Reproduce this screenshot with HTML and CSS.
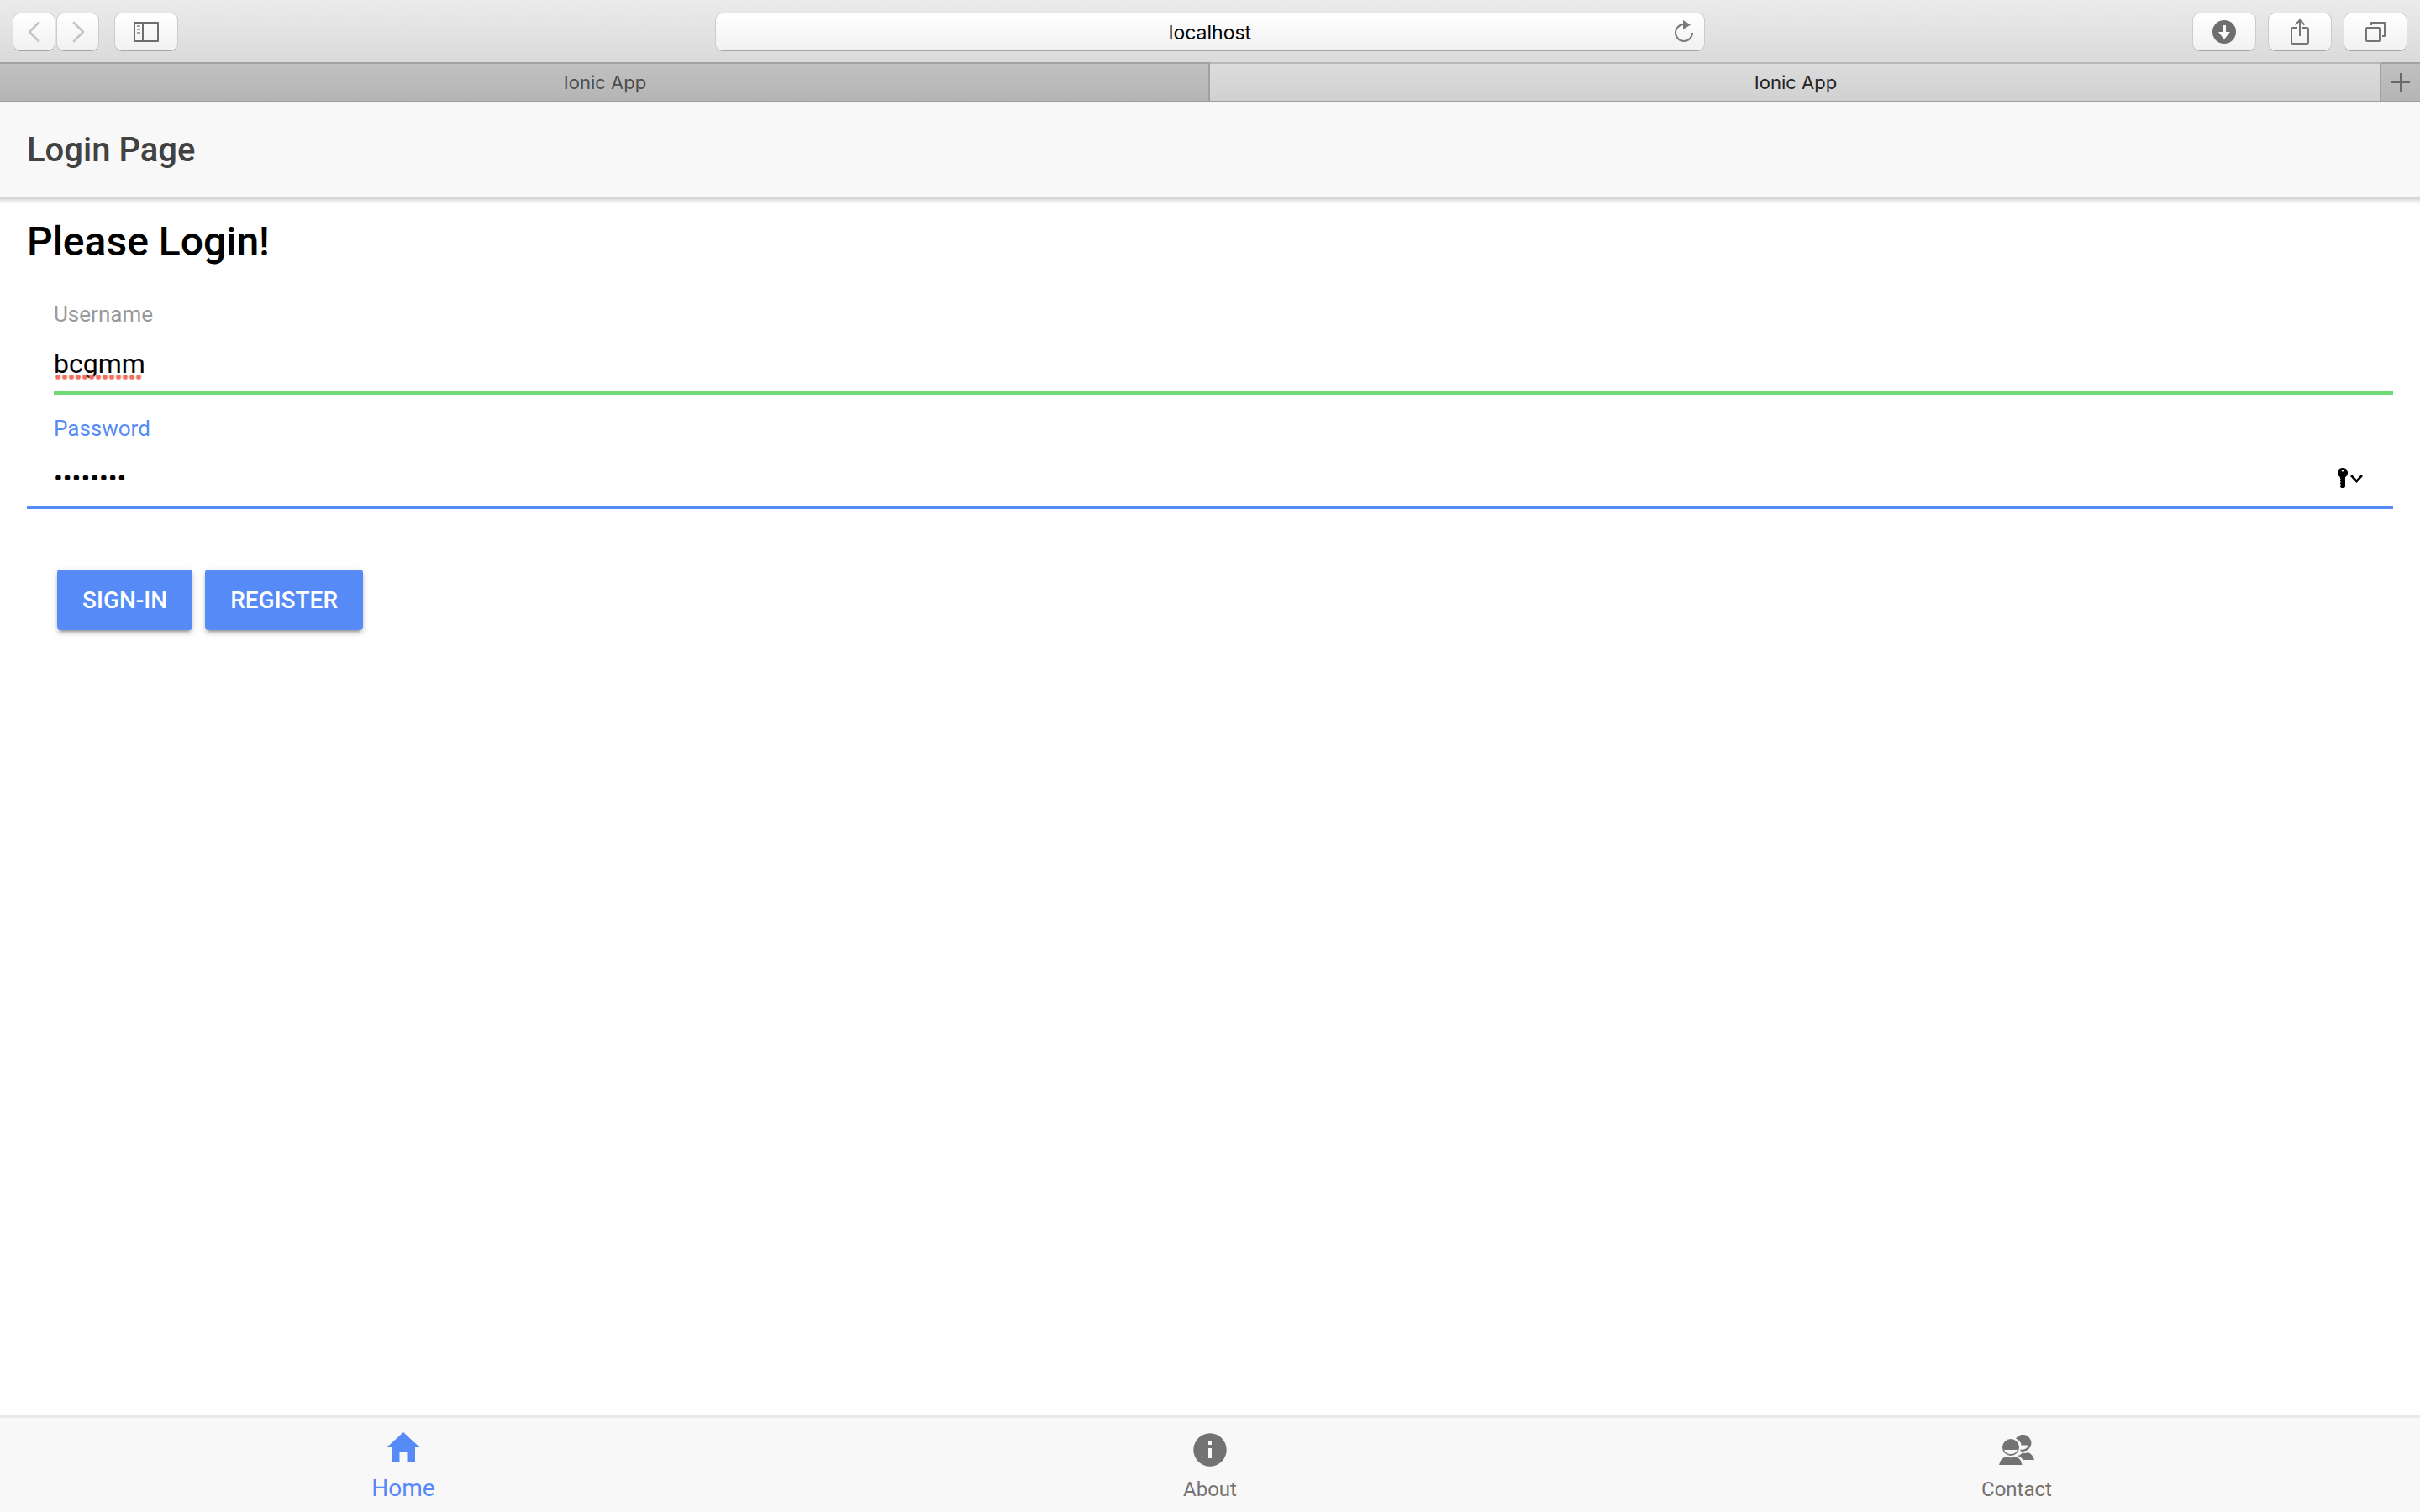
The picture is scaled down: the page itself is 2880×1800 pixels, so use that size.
FILE: index.html
```html
<!DOCTYPE html>
<html lang="en">
<head>
<meta charset="utf-8">
<title>Ionic App</title>
<link rel="stylesheet" href="styles.css">
</head>
<body>
<div class="browser">
  <div class="toolbar">
    <div class="toolbar-group">
      <div class="nav-pair">
        <button class="tool tool-nav" type="button" aria-label="Back"><svg width="16" height="26" viewBox="0 0 16 26"><path d="M13 2 2 13l11 11" fill="none" stroke="#c4c4c4" stroke-width="2.6" stroke-linecap="round" stroke-linejoin="round"/></svg></button>
        <button class="tool tool-nav" type="button" aria-label="Forward"><svg width="16" height="26" viewBox="0 0 16 26"><path d="m3 2 11 11L3 24" fill="none" stroke="#c4c4c4" stroke-width="2.6" stroke-linecap="round" stroke-linejoin="round"/></svg></button>
      </div>
      <button class="tool" type="button" aria-label="Show sidebar"><svg width="30" height="24" viewBox="0 0 30 24"><path d="M1 1h28v22H1zM11 1v22" fill="none" stroke="#6e6e6e" stroke-width="2" stroke-linejoin="round"/><path d="M4 5h4M4 9h4M4 13h4" stroke="#a4a4a4" stroke-width="2"/></svg></button>
    </div>
    <div class="address">
      <input class="address-input" type="text" value="localhost" aria-label="Address" spellcheck="false">
      <button class="reload" type="button" aria-label="Reload"><svg width="24" height="28" viewBox="0 0 24 28"><path d="M12 6a10 10 0 1 0 10 10" fill="none" stroke="#7a7a7a" stroke-width="2"/><path d="M11 1v11l9-5.5z" fill="#7a7a7a"/></svg></button>
    </div>
    <div class="toolbar-group toolbar-end">
      <button class="tool" type="button" aria-label="Downloads"><svg width="28" height="28" viewBox="0 0 28 28"><circle cx="14" cy="14" r="14" fill="#6e6e6e"/><path d="M12 6h4v8h5l-7 9-7-9h5z" fill="#fafafa"/></svg></button>
      <button class="tool" type="button" aria-label="Share"><svg width="22" height="34" viewBox="0 0 22 34"><path d="M8 12H3a2 2 0 0 0-2 2v15a2 2 0 0 0 2 2h16a2 2 0 0 0 2-2V14a2 2 0 0 0-2-2h-5M11 22V3M5.500 8.500 11 3l5.500 5.500" fill="none" stroke="#747474" stroke-width="2"/></svg></button>
      <button class="tool" type="button" aria-label="Show all tabs"><svg width="24" height="24" viewBox="0 0 24 24"><path d="M7 4V1h16v16h-3" fill="none" stroke="#747474" stroke-width="2" stroke-linejoin="round"/><rect x="1" y="7" width="16" height="16" rx="1" fill="none" stroke="#747474" stroke-width="2"/></svg></button>
    </div>
  </div>
  <div class="browser-tabs">
    <button class="browser-tab" type="button">Ionic App</button>
    <div class="tab-end">
      <button class="browser-tab browser-tab-active" type="button">Ionic App</button>
      <button class="new-tab" type="button" aria-label="New tab"><svg width="22" height="22" viewBox="0 0 22 22"><path d="M11 0v22M0 11h22" stroke="#686868" stroke-width="2"/></svg></button>
    </div>
  </div>
</div>

<header class="page-header"><h1 class="page-title">Login Page</h1></header>

<main class="content">
  <h2 class="heading">Please Login!</h2>
  <form class="login">
    <div class="item item-username">
      <label class="label" for="username">Username</label>
      <div class="control">
        <input class="field" id="username" type="text" value="bcgmm" spellcheck="false">
        <span class="misspelling" aria-hidden="true"></span>
      </div>
    </div>
    <div class="item item-password">
      <label class="label label-focus" for="password">Password</label>
      <div class="control">
        <input class="field" id="password" type="password" value="password">
        <button class="autofill" type="button" aria-label="Fill password"><svg width="30" height="24" viewBox="0 0 30 24"><path fill-rule="evenodd" d="M6 0a6 6 0 0 1 3 11.200V22q0 2-3 2t-3-2v-1l1-1-1-1v-1l1-1-1-1v-1l1-1-1-1v-1.800A6 6 0 0 1 6 0zM6 2a1.300 1.300 0 0 0 0 2.600A1.300 1.300 0 0 0 6 2z"/><path d="m16 9 6.500 7L29 9" fill="none" stroke="#000" stroke-width="2.600"/></svg></button>
      </div>
    </div>
    <div class="actions">
      <button class="btn" type="button">SIGN-IN</button>
      <button class="btn" type="button">REGISTER</button>
    </div>
  </form>
</main>

<nav class="tabbar">
  <a class="tab tab-selected" href="#home"><svg width="40" height="36" viewBox="0 0 40 36"><path d="M20 0 39.500 18H34v18H24.500V24h-9v12H6V18H.5z" fill="#568bf7"/></svg><span>Home</span></a>
  <a class="tab" href="#about"><svg width="40" height="40" viewBox="0 0 40 40"><circle cx="20" cy="20" r="19.700" fill="#737373"/><path d="M18 10h4v4h-4zM18 18h4v12h-4z" fill="#f8f8f8"/></svg><span>About</span></a>
  <a class="tab" href="#contact"><svg width="42" height="38" viewBox="0 0 42 38"><path d="M20 4.500A10 10 0 1 1 25 19.300L26 17.600A7.500 7.500 0 0 0 35 12.500H26.500Q26 7 20 4.500zM24 24.500Q27 23 27.500 21.500 31 22.500 34.500 21 40 23 42 30H28.500Q27 27 22 25z" fill="#737373"/><path fill-rule="evenodd" d="M14 5a10 10 0 1 1 0 20 10 10 0 0 1 0-20zM6 18Q8 23 14 23t8-5z" fill="#737373"/><path d="M0 36Q2 28 8 26q6 2.500 12 0 6 2 7.500 10z" fill="#737373"/></svg><span>Contact</span></a>
</nav>
</body>
</html>
```
FILE: styles.css
```css
* { box-sizing: border-box; }

html { height: 100%; }

body {
  margin: 0;
  min-height: 100%;
  display: flex;
  flex-direction: column;
  background: #fff;
  color: #000;
  font-family: Roboto, "Liberation Sans", sans-serif;
}

button, input {
  margin: 0;
  padding: 0;
  border: 0;
  background: none;
  color: inherit;
  font: inherit;
  outline: none;
}

svg { display: block; }

/* Browser chrome */
.browser { font-family: Inter, "Liberation Sans", sans-serif; }

.toolbar {
  display: grid;
  grid-template-columns: 1fr 1178px 1fr;
  align-items: center;
  height: 74px;
  padding: 2px 15px 0;
  background: linear-gradient(#ebebeb, #dadada);
}

.toolbar-group { display: flex; gap: 18px; }
.toolbar-end { justify-content: flex-end; gap: 14px; }
.nav-pair { display: flex; gap: 1px; }

.tool, .address {
  height: 46px;
  border: 1px solid #cbcbcb;
  border-bottom-color: #a6a6a6;
  border-radius: 9px;
  background: linear-gradient(#fff, #f1f1f1);
}

.tool {
  display: flex;
  align-items: center;
  justify-content: center;
  width: 76px;
}

.tool-nav { width: 51px; }

.address { position: relative; }

.address-input {
  width: 100%;
  height: 100%;
  padding-top: 2px;
  text-align: center;
  font-size: 23px;
}

.reload {
  position: absolute;
  top: 7px;
  right: 12px;
}

.browser-tabs {
  display: grid;
  grid-template-columns: 1fr 1fr;
  height: 48px;
  border-bottom: 2px solid #9e9e9e;
}

.tab-end { display: flex; }

.browser-tab, .new-tab {
  border-top: 2px solid #a2a2a2;
  background: linear-gradient(#c0c0c0, #b5b5b5);
}

.browser-tab {
  padding-left: 2px;
  border-right: 2px solid #a0a0a0;
  color: #4c4c4c;
  font-size: 22px;
}

.browser-tab-active {
  flex: 1;
  border-top-color: #b8b8b8;
  background: linear-gradient(#dcdcdc, #d1d1d1);
  color: #222;
}

.new-tab {
  display: flex;
  align-items: center;
  justify-content: center;
  width: 46px;
}

/* Page */
.page-header {
  position: relative;
  display: flex;
  align-items: center;
  height: 112px;
  padding: 0 32px;
  background: #f8f8f8;
}

.page-header::after {
  content: "";
  position: absolute;
  top: 100%;
  left: 0;
  right: 0;
  height: 10px;
  background: linear-gradient(#cecece, #d8d8d8 25%, #f4f4f4 65%, #fff);
}

.page-title {
  margin: 0;
  color: #424242;
  font-size: 40px;
  font-weight: 500;
}

.content {
  flex: 1;
  padding: 24px 32px;
}

.heading {
  margin: 0;
  font-size: 48px;
  line-height: 60px;
  font-weight: 500;
}

.item { padding-left: 32px; }
.item-username { padding-top: 40px; }

.item-password {
  padding-top: 24px;
  border-bottom: 4px solid #568bf7;
}

.item-username .control { border-bottom: 4px solid #6fdb74; }

.label {
  display: block;
  color: #999;
  font-size: 26px;
  line-height: 32px;
}

.label-focus { color: #568bf7; }

.control {
  position: relative;
  box-sizing: content-box;
  display: flex;
  align-items: center;
  height: 54px;
  padding: 16px 0 6px;
}

.field {
  flex: 1;
  min-width: 0;
  height: 40px;
  font-size: 32px;
}

.misspelling {
  position: absolute;
  left: 1px;
  bottom: 14px;
  width: 104px;
  height: 6px;
  background: radial-gradient(circle at 4px 3px, #f07060 2px, rgba(240, 112, 96, 0) 4px) 0 0 / 8px 6px;
}

.autofill { margin-right: 36px; }

.actions {
  display: flex;
  gap: 15px;
  padding: 72px 36px 8px;
}

.btn {
  height: 72px;
  padding: 0 30px;
  border-radius: 4px;
  background: #568bf7;
  box-shadow: 0 4px 4px rgba(0, 0, 0, .14), 0 6px 2px -4px rgba(0, 0, 0, .2), 0 2px 10px rgba(0, 0, 0, .12);
  color: #fff;
  font-size: 28px;
  font-weight: 500;
}

/* Bottom tabs */
.tabbar {
  display: grid;
  grid-template-columns: repeat(3, 1fr);
  height: 116px;
  border-top: 4px solid #e9e9e9;
  background: #f8f8f8;
}

.tab {
  display: flex;
  flex-direction: column;
  align-items: center;
  justify-content: flex-end;
  gap: 12px;
  padding-bottom: 12px;
  color: #737373;
  font-size: 24px;
  line-height: 30px;
  text-decoration: none;
}

.tab-selected {
  gap: 16px;
  padding-bottom: 13px;
  color: #568bf7;
  font-size: 28px;
}
```
